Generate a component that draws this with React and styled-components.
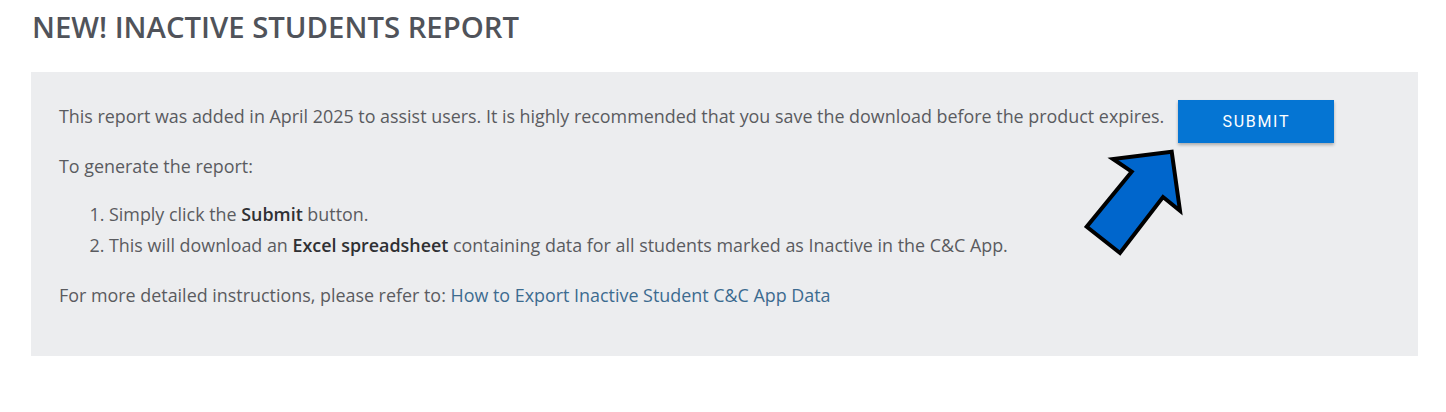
import React from "react";
import styled, { createGlobalStyle } from "styled-components";

const Global = createGlobalStyle`
  html, body { margin: 0; padding: 0; background: #ffffff; }
  body { font-family: "Open Sans", "Noto Sans", sans-serif; }
`;

const Page = styled.div`
  padding: 0 28px 0 31px;
  width: 1387px;
`;

const Title = styled.h1`
  margin: 0;
  padding: 7px 0 0 1px;
  height: 72px;
  box-sizing: border-box;
  font-size: 29.3px;
  font-weight: 600;
  line-height: 40px;
  color: #50535a;
  letter-spacing: 0;
`;

const Panel = styled.section`
  position: relative;
  background: #ecedef;
  padding: 28px 28px 26px 28px;
  min-height: 284px;
  box-sizing: border-box;
  color: #5a5b5f;
  font-size: 17.9px;
`;

const TopRow = styled.div`
  display: flex;
  align-items: flex-start;
  gap: 14px;
  margin-bottom: 7px;
`;

const Para = styled.p`
  margin: ${(p) => p.$mt || 0}px 0 0 0;
  line-height: 32px;
  white-space: nowrap;
`;

const SubmitButton = styled.button`
  width: 156px;
  height: 43px;
  border: none;
  border-radius: 0;
  background: #0575d3;
  color: #ffffff;
  font-family: Roboto, "Liberation Sans", Arial, sans-serif;
  font-size: 16px;
  font-weight: 400;
  letter-spacing: 1.7px;
  box-shadow: 0 2px 3px rgba(0, 0, 0, 0.28);
  cursor: pointer;
  flex-shrink: 0;
`;

const Steps = styled.ol`
  margin: 17px 0 0 0;
  padding-left: 50px;
  line-height: 31px;
  white-space: nowrap;
`;

const Strong = styled.b`
  font-weight: 600;
  color: #2f3033;
`;

const Link = styled.a`
  color: #3c6b8f;
  text-decoration: none;
`;

const Arrow = styled.svg`
  position: absolute;
  left: 1049px;
  top: 73px;
  width: 110px;
  height: 115px;
  overflow: visible;
`;

export default function App() {
  return (
    <>
      <Global />
      <Page>
        <Title>NEW! INACTIVE STUDENTS REPORT</Title>
        <Panel>
          <TopRow>
            <Para>
              This report was added in April 2025 to assist users. It is highly
              recommended that you save the download before the product expires.
            </Para>
            <SubmitButton>SUBMIT</SubmitButton>
          </TopRow>
          <Para>To generate the report:</Para>
          <Steps>
            <li>
              Simply click the <Strong>Submit</Strong> button.
            </li>
            <li>
              This will download an <Strong>Excel spreadsheet</Strong> containing
              data for all students marked as Inactive in the C&amp;C App.
            </li>
          </Steps>
          <Para $mt={18}>
            For more detailed instructions, please refer to:{" "}
            <Link href="#">How to Export Inactive Student C&amp;C App Data</Link>
          </Para>
          <Arrow viewBox="0 0 110 115">
            <polygon
              points="91.7,6.7 33,14 51.7,26.7 6.7,81.7 40,108 83,52 100,65.7"
              fill="#0066cc"
              stroke="#000000"
              strokeWidth="4"
              strokeLinejoin="miter"
            />
          </Arrow>
        </Panel>
      </Page>
    </>
  );
}
